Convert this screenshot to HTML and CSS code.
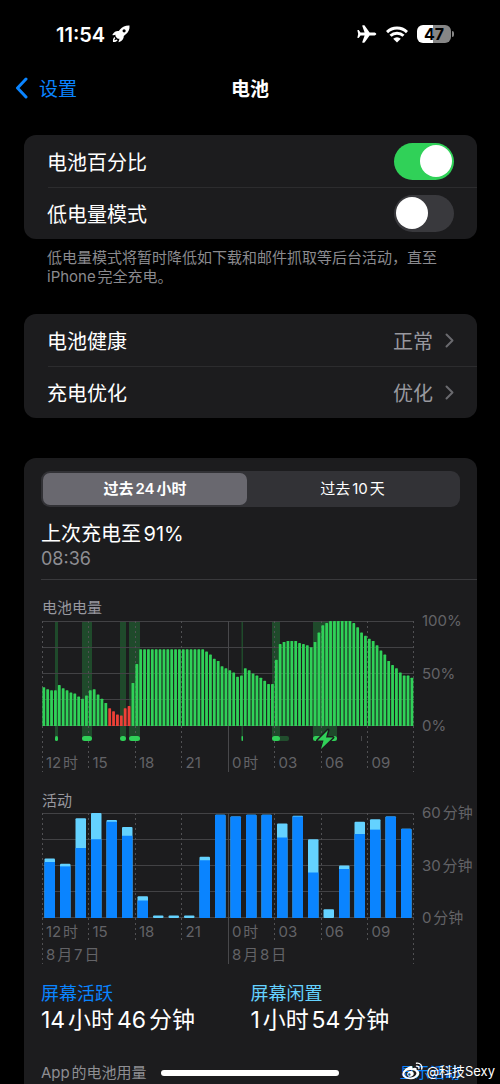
FILE: index.html
```html
<!DOCTYPE html>
<html lang="zh-CN">
<head>
<meta charset="utf-8">
<meta name="viewport" content="width=device-width, initial-scale=1">
<title>电池</title>
<link rel="stylesheet" href="styles.css">
</head>
<body>
<div class="screen">
  <header class="status">
    <div class="status-side">
      <time class="clock">11:54</time>
      <svg class="rocket" viewBox="0 0 18 18" aria-hidden="true"><path fill="#fff" fill-rule="evenodd" d="M17.5.4C13.5.2 10.5 1.600 8 4.500L6.800 6C4.500 5.600 2.300 6.500.5 9.600c-.2.500.1.700.6.600l2.500-.5c-.5 1 0 1.900.8 2.800.9 1 2 1.600 3.100 1.200-.3 1.200-.6 2.100-.9 2.900-.2.500.2.800.7.500 3.100-1.500 4.600-3.700 4.500-6.200l1.700-1.400C16.500 7 17.900 4.200 17.500.4ZM12.100 4.200a1.600 1.600 0 1 1 0 3.200 1.600 1.600 0 0 1 0-3.200Z"/><path fill="#fff" d="M2.500 12C1 13 .8 15 1 17c2 .200 3.800-.200 4.600-1.700l-1.200-.8c-.6.600-1.200.8-2 .8 0-.8.200-1.500.9-2.100Z"/></svg>
    </div>
    <div class="status-side">
      <svg class="plane" viewBox="0 0 20 18" aria-hidden="true"><path fill="#fff" d="M19.300 9c0-.9-1.200-1.500-2.500-1.500h-4.200L7.800.7C7.600.4 7.300.3 7 .3H5.700c-.3 0-.5.3-.4.600l2.300 6.600H3.500L2.100 5.400c-.2-.3-.4-.4-.7-.4H.8c-.3 0-.4.200-.4.500L1.200 9 .4 12.500c0 .3.100.5.4.5h.6c.3 0 .5-.100.7-.4l1.400-2.100h4.100l-2.300 6.600c-.1.300.1.600.4.600H7c.3 0 .6-.100.8-.4l4.800-6.800h4.200c1.300 0 2.500-.6 2.500-1.500Z"/></svg>
      <svg class="wifi" viewBox="0 0 22 17" aria-hidden="true"><g fill="none" stroke="#fff" stroke-width="3"><path d="M1 6.100a14.300 14.300 0 0 1 20 0"/><path d="M4.500 9.800a9.300 9.300 0 0 1 13 0"/></g><path fill="#fff" d="M11 16.600 7.200 12.800a5.300 5.300 0 0 1 7.600 0Z"/></svg>
      <div class="battery"><span class="battery-level">47</span><span class="battery-cap"></span></div>
    </div>
  </header>

  <nav class="nav">
    <a class="back" href="#settings"><svg class="back-icon" viewBox="0 0 13 22" aria-hidden="true"><path d="M11 2 2.500 11 11 20" fill="none" stroke="currentColor" stroke-width="3" stroke-linecap="round" stroke-linejoin="round"/></svg><span class="back-text">设置</span></a>
    <h1 class="title">电池</h1>
  </nav>

  <main class="content">
    <section class="card">
      <div class="row"><label class="name" for="percent">电池百分比</label><input class="switch" type="checkbox" role="switch" id="percent" checked></div>
      <div class="row"><label class="name" for="lowpower">低电量模式</label><input class="switch" type="checkbox" role="switch" id="lowpower"></div>
    </section>
    <p class="note">低电量模式将暂时降低如下载和邮件抓取等后台活动，直至 iPhone完全充电。</p>

    <section class="card links">
      <a class="row" href="#health"><span class="name">电池健康</span><span class="value"><span class="name">正常</span><svg class="chevron" viewBox="0 0 9 15" aria-hidden="true"><path d="m1.500 1.500 6 6-6 6"/></svg></span></a>
      <a class="row" href="#charging"><span class="name">充电优化</span><span class="value"><span class="name">优化</span><svg class="chevron" viewBox="0 0 9 15" aria-hidden="true"><path d="m1.500 1.500 6 6-6 6"/></svg></span></a>
    </section>

    <section class="card usage">
      <div class="segments">
        <button class="segment selected" type="button" aria-pressed="true">过去24小时</button>
        <button class="segment" type="button" aria-pressed="false">过去10天</button>
      </div>
      <div class="last-charge">
        <h2 class="last-title">上次充电至91%</h2>
        <p class="last-time">08:36</p>
      </div>

      <h3 class="chart-title">电池电量</h3>
      <div class="chart level">
        <svg class="plot" id="level-plot" viewBox="0 0 372 152" preserveAspectRatio="none" role="img" aria-label="电池电量"></svg>
        <div class="scale"><span>100%</span><span>50%</span><span>0%</span></div>
        <div class="hours"><span>12时</span><span>15</span><span>18</span><span>21</span><span>0时</span><span>03</span><span>06</span><span>09</span></div>
      </div>

      <h3 class="chart-title">活动</h3>
      <div class="chart activity">
        <svg class="plot" id="activity-plot" viewBox="0 0 372 152" preserveAspectRatio="none" role="img" aria-label="活动"></svg>
        <div class="scale"><span>60分钟</span><span>30分钟</span><span>0分钟</span></div>
        <div class="hours"><span>12时</span><span>15</span><span>18</span><span>21</span><span>0时</span><span>03</span><span>06</span><span>09</span></div>
        <div class="dates"><span>8月7日</span><span>8月8日</span></div>
      </div>

      <dl class="totals">
        <div><dt class="active">屏幕活跃</dt><dd>14小时46分钟</dd></div>
        <div><dt class="idle">屏幕闲置</dt><dd>1小时54分钟</dd></div>
      </dl>
      <div class="apps"><h3 class="apps-title">App的电池用量</h3><a class="apps-link" href="#activity">显示活动</a></div>
    </section>
  </main>

  <div class="home-bar"></div>
  <div class="watermark">
    <svg class="weibo" viewBox="0 0 22 18" aria-hidden="true"><path fill="#fff" fill-rule="evenodd" d="M8.200 4.300c1.700-.6 2.600.3 2.100 2 2.800-1.200 5-.7 4.300 1.700 2 .6 3 1.900 2.500 3.900-.8 3.200-4.700 5.300-8.900 5.300C3.900 17.200.4 15.200.4 12c0-3 4.300-6.800 7.800-7.700ZM8.300 8.100c-3.500.2-6 2-5.800 4.200.2 2.100 2.900 3.500 6.200 3.200 3.300-.3 5.900-2.300 5.700-4.400-.2-2-3-3.200-6.100-3Z"/><path fill="#fff" fill-rule="evenodd" d="M8.900 9.100c2 .1 3.200 1.500 2.800 3.100-.4 1.700-2.300 2.800-4.200 2.500-1.800-.3-2.700-1.700-2.200-3.200.5-1.500 1.900-2.500 3.600-2.400ZM7.300 11.300a1.200 1.200 0 1 0 0 2.400 1.200 1.200 0 0 0 0-2.400Z"/><path fill="none" stroke="#fff" stroke-width="1.400" stroke-linecap="round" d="M14.500 1.200c3.600-.5 6.200 2.400 5.200 5.900M14.500 4.100c1.800-.2 2.900 1 2.400 2.500"/></svg>
    <span>@科技Sexy</span>
  </div>
</div>
<script src="charts.js"></script>
</body>
</html>
```
FILE: styles.css
```css
* { box-sizing: border-box; margin: 0; padding: 0; }
body {
  background: #000;
  color: #fff;
  font-family: Inter, "Noto Sans CJK SC", sans-serif;
  font-size: 20px;
  line-height: 24px;
  text-autospace: normal;
}
h1, h2, h3 { font-weight: 400; }
a { color: inherit; text-decoration: none; }
.screen { position: relative; display: flex; flex-direction: column; min-height: 100vh; overflow: hidden; }

.status { display: flex; justify-content: space-between; padding: 22px 46px 0 56px; }
.status-side { display: flex; align-items: center; height: 24px; }
.clock { padding-top: 1px; font-size: 20px; font-weight: 600; }
.rocket { width: 18px; height: 18px; margin-left: 7px; }
.plane { width: 20px; height: 18px; margin-right: 9px; }
.wifi { width: 22px; height: 17px; margin-right: 9px; }
.battery { display: flex; align-items: center; gap: 1px; }
.battery-level {
  width: 34px;
  border-radius: 6px;
  background: linear-gradient(90deg, #fff 47%, #868686 47%);
  color: #000;
  font-size: 16px;
  font-weight: 700;
  line-height: 18px;
  text-align: center;
}
.battery-cap { width: 2px; height: 6px; border-radius: 0 2px 2px 0; background: #868686; }

.nav { display: grid; grid-template-columns: 1fr auto 1fr; align-items: center; height: 48px; margin-top: 18px; padding: 0 15px; }
.back { display: flex; align-items: center; gap: 11px; color: #0a84ff; font-size: 19px; }
.back-icon { width: 13px; height: 22px; }
.back-text { padding-top: 3px; }
.title { padding-top: 3px; font-size: 19px; font-weight: 700; }

.content { display: flex; flex: 1; flex-direction: column; padding: 23px 23px 0 24px; }
.card { border-radius: 12px; background: #1c1c1e; }
.row { position: relative; display: flex; align-items: center; justify-content: space-between; height: 52px; padding: 0 23px; }
.row + .row::before { content: ""; position: absolute; top: 0; right: 0; left: 24px; height: 1px; background: #2c2c2e; }
.name { padding-top: 4px; }
.switch { appearance: none; width: 60px; height: 37px; border-radius: 19px; background: #39393d; cursor: pointer; }
.switch::before { content: ""; display: block; width: 32px; height: 32px; margin: 2px; border-radius: 50%; background: #fff; }
.switch:checked { background: #30d158; }
.switch:checked::before { margin-left: 26px; }
.note { padding: 9px 24px 0 23px; color: #8a8a8e; font-size: 15px; line-height: 19px; }
.links { margin-top: 28px; }
.value { display: flex; align-items: center; gap: 12px; color: #98989e; }
.chevron { width: 9px; height: 15px; fill: none; stroke: #6a6a6e; stroke-width: 2; stroke-linecap: round; stroke-linejoin: round; }

.usage { flex: 1; margin-top: 40px; padding: 13px 17px 0; border-radius: 12px 12px 0 0; }
.segments { display: grid; grid-template-columns: 204fr 211fr; height: 36px; padding: 2px; border-radius: 9px; background: #323236; }
.segment { border: 0; border-radius: 7px; background: none; color: #fff; font: inherit; font-size: 15px; cursor: pointer; }
.segment.selected { background: #69686f; font-weight: 600; }
.last-charge { margin-right: -17px; padding: 14px 0 8px; border-bottom: 1px solid #39393c; }
.last-title { font-size: 20px; line-height: 26px; }
.last-time { color: #8e8e93; font-size: 18px; line-height: 24px; }

.chart-title { padding: 16px 0 0 1px; color: #98989e; font-size: 15px; line-height: 24px; }
.chart { display: grid; grid-template-columns: 1fr 46px; padding-left: 1px; color: #636367; font-size: 15px; line-height: 20px; }
.level { grid-template-rows: 105px 47px; margin-top: 1px; }
.activity { grid-template-rows: 105px 24px 23px; }
.plot { display: block; grid-area: 1 / 1 / -1 / 2; width: 100%; height: 152px; }
.scale { display: flex; grid-area: 1 / 2; flex-direction: column; justify-content: space-between; margin: -10px -17px -10px 8px; white-space: nowrap; }
.hours { display: grid; grid-area: 2 / 1; grid-template-columns: repeat(8, 1fr); align-items: end; white-space: nowrap; }
.hours span { padding-left: 4px; }
.dates { display: grid; grid-area: 3 / 1; grid-template-columns: 1fr 1fr; align-items: end; }
.dates span { padding-left: 4px; }

.totals { display: grid; grid-template-columns: 1fr 1fr; padding-top: 17px; }
.totals dt { font-size: 18px; line-height: 24px; }
.totals dd { font-size: 23px; line-height: 28px; }
.active { color: #0a84ff; }
.idle { color: #64d2ff; }
.apps { display: flex; justify-content: space-between; padding-top: 27px; font-size: 15px; line-height: 24px; }
.apps-title { color: #8e8e93; font-size: 15px; }
.apps-link { color: #0a84ff; }

.home-bar { position: absolute; bottom: 9px; left: 50%; width: 178px; height: 6px; margin-left: -89px; border-radius: 3px; background: #fff; }
.watermark { position: absolute; right: 5px; bottom: 4px; display: flex; align-items: center; gap: 2px; font-size: 13px; line-height: 20px; text-autospace: no-autospace; }
.weibo { width: 22px; height: 18px; }

.grid-line { stroke: #424245; }
.hour-line { stroke: #505053; stroke-dasharray: 2 3; }
.day-line { stroke: #48484b; }
.bar-green { fill: #30d158; }
.bar-red { fill: #ed4037; }
.band { fill: #1f4a2b; }
.pill-dim { fill: #214d2d; }
.bar-active { fill: #0a84ff; }
.bar-idle { fill: #64d2ff; }
.bolt { fill: #30d158; stroke: #1c1c1e; stroke-width: 3; stroke-linejoin: round; paint-order: stroke; }
.tick { fill: #47474a; }
```
FILE: charts.js
```js
const WIDTH = 372;
const HEIGHT = 105;

// Battery percentage for each quarter of an hour.
const levels = [
  37, 35, 34, 34, 39, 36, 34, 32, 31, 28, 26, 29, 34, 35, 30, 26, 22, 17, 14, 11, 10, 17, 19, 41,
  59, 73, 73, 73, 73, 73, 73, 73, 73, 73, 73, 73, 73, 73, 73, 73, 73, 73, 71, 68, 64, 62, 57, 55,
  53, 51, 47, 48, 55, 53, 50, 48, 46, 43, 40, 40, 63, 78, 80, 81, 81, 81, 79, 78, 77, 75, 80, 89,
  96, 98, 100, 100, 100, 100, 100, 100, 98, 94, 89, 86, 83, 81, 77, 72, 68, 62, 58, 55, 51, 48, 48, 46
];

// Charging periods as start and end positions on the plot.
const charging = [[13, 16], [40, 50], [78, 84], [87, 98], [199.5, 201], [230, 238], [271, 295]];

// Minutes of use in each hour: [total, screen active].
const usage = [
  [34, 32], [31, 29.5], [57, 40], [60, 45], [56, 55], [52, 47], [12.5, 10], [1.5, 0],
  [1.5, 0], [1.5, 0], [35, 33], [59, 59], [58, 58], [59, 59], [59, 59], [54, 46],
  [58.5, 58], [45, 26], [5, 0], [30, 28], [55, 48], [56.5, 50.5], [58, 58], [51, 51]
];

function add(svg, name, attributes) {
  const node = document.createElementNS("http://www.w3.org/2000/svg", name);
  for (const [key, value] of Object.entries(attributes)) node.setAttribute(key, value);
  svg.append(node);
}

function rect(svg, cls, x, y, width, height, rx = 0) {
  add(svg, "rect", { class: cls, x, y, width, height, rx });
}

function gridLines(svg, hourEnd, dayEnd) {
  for (const y of [0.5, 26.5, 52.5, 78.5, 104.5]) {
    add(svg, "line", { class: "grid-line", x1: 0, x2: WIDTH, y1: y, y2: y });
  }
  for (let i = 0; i <= 8; i++) {
    const x = Math.min(Math.floor(i * WIDTH / 8) + 0.5, WIDTH - 0.5);
    const cls = i === 4 ? "day-line" : "hour-line";
    const y2 = i % 4 === 0 ? dayEnd : hourEnd;
    add(svg, "line", { class: cls, x1: x, x2: x, y1: 0, y2 });
  }
}

const levelPlot = document.getElementById("level-plot");
for (const [start, end] of charging) rect(levelPlot, "band", start, 0, end - start, 118);
gridLines(levelPlot, 150, 151);
levels.forEach((level, i) => {
  const height = level * HEIGHT / 100;
  rect(levelPlot, level < 20 ? "bar-red" : "bar-green", i * 3.875 + 0.4, HEIGHT - height, 2.8, height, 0.6);
});
rect(levelPlot, "pill-dim", 232, 115, 15, 5, 2);
for (const [start, end] of charging) rect(levelPlot, "bar-green", start, 115, end - start, 5, Math.min(2.5, (end - start) / 2));
rect(levelPlot, "tick", 319, 115, 1, 5);
add(levelPlot, "path", { class: "bolt", d: "M286 109 275.500 119.500h6l-2.500 8.500L291 116.500h-7Z" });

const activityPlot = document.getElementById("activity-plot");
gridLines(activityPlot, 127, 151);
usage.forEach(([total, active], i) => {
  const scale = HEIGHT / 60;
  const x = i * 15.5 + 2.5;
  rect(activityPlot, "bar-idle", x, HEIGHT - total * scale, 10.5, total * scale, 1);
  if (active) rect(activityPlot, "bar-active", x, HEIGHT - active * scale, 10.5, active * scale, total === active ? 1 : 0);
});
```
